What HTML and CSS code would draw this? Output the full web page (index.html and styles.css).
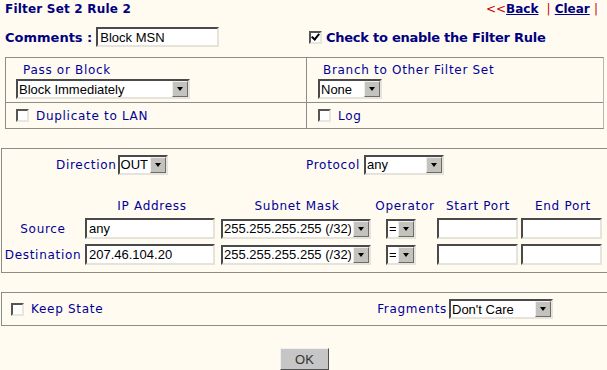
FILE: index.html
```html
<!DOCTYPE html>
<html>
  <head>
    <title>Filter Set 2 Rule 2</title>
    <link rel="stylesheet" href="styles.css">
  </head>
  <body>
    <div class="top">
      <span class="title">Filter Set 2 Rule 2</span>
      <span class="nav"><span class="red">&lt;&lt;</span><a href="#">Back</a> <span class="red">&nbsp;|</span> <a href="#">Clear</a> <span class="red">|</span></span>
    </div>

    <div class="comment-row">
      <div class="comment-cell">
        <span class="big">Comments :</span>
        <input class="txt comment-input" value="Block MSN">
      </div>
      <label class="big enable"><input type="checkbox" class="cb" checked> Check to enable the Filter Rule</label>
    </div>

    <div class="box action-box">
      <div class="cell">
        <div class="cell-label">Pass or Block</div>
        <span class="sel pass-sel">
          <select><option>Block Immediately</option><option>Pass</option></select>
        </span>
      </div>
      <div class="cell cell-right">
        <div class="cell-label">Branch to Other Filter Set</div>
        <span class="sel branch-sel">
          <select><option>None</option></select>
        </span>
      </div>
      <div class="cell cell-low">
        <label class="check-label"><input type="checkbox" class="cb"> Duplicate to LAN</label>
      </div>
      <div class="cell cell-low cell-right">
        <label class="check-label"><input type="checkbox" class="cb"> Log</label>
      </div>
    </div>

    <div class="box match-box">
      <div class="dir-row">
        <div class="dir-group">
          Direction
          <span class="sel dir-sel"><select><option>OUT</option><option>IN</option></select></span>
        </div>
        <div class="proto-group">
          Protocol
          <span class="sel proto-sel"><select><option>any</option></select></span>
        </div>
      </div>

      <div class="addr-grid">
        <div></div>
        <div class="head">IP Address</div>
        <div class="head">Subnet Mask</div>
        <div class="head">Operator</div>
        <div class="head">Start Port</div>
        <div class="head">End Port</div>

        <div class="row-label">Source</div>
        <input class="txt ip-input" value="any">
        <span class="sel mask-sel"><select><option>255.255.255.255 (/32)</option></select></span>
        <span class="sel op-sel"><select><option>=</option></select></span>
        <input class="txt port-input" value="">
        <input class="txt port-input" value="">

        <div class="row-label">Destination</div>
        <input class="txt ip-input" value="207.46.104.20">
        <span class="sel mask-sel"><select><option>255.255.255.255 (/32)</option></select></span>
        <span class="sel op-sel"><select><option>=</option></select></span>
        <input class="txt port-input" value="">
        <input class="txt port-input" value="">
      </div>
    </div>

    <div class="box state-box">
      <label class="check-label"><input type="checkbox" class="cb"> Keep State</label>
      <div class="frag-group">
        Fragments
        <span class="sel frag-sel"><select><option>Don't Care</option></select></span>
      </div>
    </div>

    <div class="buttons">
      <button class="ok-button">OK</button>
    </div>
  </body>
</html>
```

FILE: styles.css
```css
body {
  margin: 0;
  background-color: #fffbf0;
  color: #000099;
  font-family: "DejaVu Sans", Verdana, sans-serif;
  font-size: 12px;
  letter-spacing: 0.7px;
}

.top {
  display: flex;
  justify-content: space-between;
  padding: 2px 9px 0 5px;
  height: 17px;
  line-height: 15px;
  letter-spacing: 0;
}

.title {
  font-weight: bold;
  color: #000080;
  letter-spacing: 0.2px;
}

.nav {
  font-weight: bold;
}

.nav a {
  color: #000080;
}

.red {
  color: #cc0000;
  font-weight: normal;
}

.comment-row {
  display: grid;
  grid-template-columns: 304px 1fr;
  align-items: center;
  margin-top: 7px;
  height: 22px;
  letter-spacing: 0;
}

.comment-cell {
  display: flex;
  align-items: center;
  padding-left: 5px;
}

.big {
  font-size: 13px;
  font-weight: bold;
  color: #000080;
}

.enable {
  display: flex;
  align-items: center;
  gap: 4px;
  padding-left: 5px;
  letter-spacing: -0.25px;
}

.txt {
  box-sizing: border-box;
  height: 20px;
  border: 2px solid;
  border-color: #4a4a4a #e6e3da #e6e3da #4a4a4a;
  background-color: white;
  font-family: "Liberation Sans", Arial, sans-serif;
  font-size: 13px;
  letter-spacing: 0;
  color: black;
  padding: 0 2px;
  margin: 0;
  border-radius: 0;
  outline: none;
}

.comment-input {
  width: 123px;
  margin-left: 4px;
}

.cb {
  appearance: none;
  -webkit-appearance: none;
  box-sizing: border-box;
  width: 13px;
  height: 13px;
  margin: 0;
  border: 2px solid;
  border-color: #555 #e8e6e0 #e8e6e0 #555;
  background-color: white;
  position: relative;
  flex-shrink: 0;
}

.cb:checked::after {
  content: "";
  position: absolute;
  left: 2px;
  top: -1px;
  width: 3px;
  height: 6px;
  border: solid black;
  border-width: 0 2px 2px 0;
  transform: rotate(40deg);
}

.sel {
  position: relative;
  display: inline-block;
  vertical-align: middle;
}

.sel select {
  appearance: none;
  -webkit-appearance: none;
  box-sizing: border-box;
  width: 100%;
  height: 20px;
  border: 2px solid;
  border-color: #4a4a4a #e6e3da #e6e3da #4a4a4a;
  border-radius: 0;
  background-color: white;
  font-family: "Liberation Sans", Arial, sans-serif;
  font-size: 13px;
  letter-spacing: 0;
  color: black;
  padding: 0 18px 0 1px;
  margin: 0;
  outline: none;
}

.sel::before {
  content: "";
  position: absolute;
  top: 2px;
  right: 2px;
  bottom: 2px;
  width: 16px;
  box-sizing: border-box;
  background-color: #c4c2bc;
  border: 1px solid;
  border-color: #eeeeee #6b6b6b #6b6b6b #eeeeee;
  pointer-events: none;
}

.sel::after {
  content: "";
  position: absolute;
  right: 7px;
  top: 8px;
  border-left: 3.5px solid transparent;
  border-right: 3.5px solid transparent;
  border-top: 4px solid black;
  pointer-events: none;
}

.box {
  border: 1px solid #8c8c88;
  border-right-color: #b8b6b0;
}

/* pass / branch / duplicate / log */
.action-box {
  display: grid;
  grid-template-columns: 300px 1fr;
  margin: 9px 3px 0 5px;
}

.cell {
  padding: 5px 0 0 10px;
  height: 44px;
  box-sizing: border-box;
}

.cell-right {
  border-left: 1px solid #8c8c88;
  padding-left: 11px;
}

.cell-label {
  padding-left: 7px;
  height: 16px;
  line-height: 15px;
}

.cell-right .cell-label {
  padding-left: 5px;
}

.cell-low {
  border-top: 1px solid #8c8c88;
  height: 26px;
  padding-top: 0;
  display: flex;
  align-items: center;
}

.check-label {
  display: flex;
  align-items: center;
  gap: 7px;
}

.pass-sel {
  width: 174px;
}

.branch-sel {
  width: 64px;
}

/* direction / addresses */
.match-box {
  margin: 19px 0 0 1px;
  border-right: none;
  padding: 5px 0 7px 0;
}

.dir-row {
  display: grid;
  grid-template-columns: 304px 1fr;
  align-items: center;
  height: 21px;
}

.dir-group {
  padding-left: 54px;
  display: flex;
  align-items: center;
  gap: 1px;
}

.proto-group {
  display: flex;
  align-items: center;
  gap: 4px;
}

.dir-sel {
  width: 50px;
}

.proto-sel {
  width: 80px;
}

.addr-grid {
  display: grid;
  grid-template-columns: 80px 134px 152px 60px 82px 84px;
  column-gap: 2px;
  row-gap: 5px;
  align-items: center;
  margin-top: 24px;
  padding-left: 1px;
}

.head {
  text-align: center;
  line-height: 15px;
  margin-bottom: -1px;
  white-space: nowrap;
}

.row-label {
  text-align: center;
}

.ip-input {
  width: 130px;
  height: 21px;
}

.mask-sel {
  width: 150px;
}

.op-sel {
  width: 30px;
  margin-left: 11px;
}

.port-input {
  width: 81px;
  height: 21px;
}

/* keep state / fragments */
.state-box {
  margin: 19px 0 0 1px;
  border-right: none;
  height: 32px;
  display: flex;
  align-items: center;
  padding-left: 9px;
}

.frag-group {
  display: flex;
  align-items: center;
  gap: 2px;
  margin-left: auto;
  margin-right: 54px;
}

.frag-sel {
  width: 104px;
}

.buttons {
  text-align: center;
  padding-top: 22px;
}

.ok-button {
  width: 49px;
  height: 22px;
  background-color: #c6c6c6;
  border: 1px solid;
  border-color: #f0f0f0 #505050 #505050 #f0f0f0;
  font-family: "Liberation Sans", Arial, sans-serif;
  font-size: 13px;
  letter-spacing: 0;
  color: #333;
  padding: 0;
  margin-left: 2px;
}
```
